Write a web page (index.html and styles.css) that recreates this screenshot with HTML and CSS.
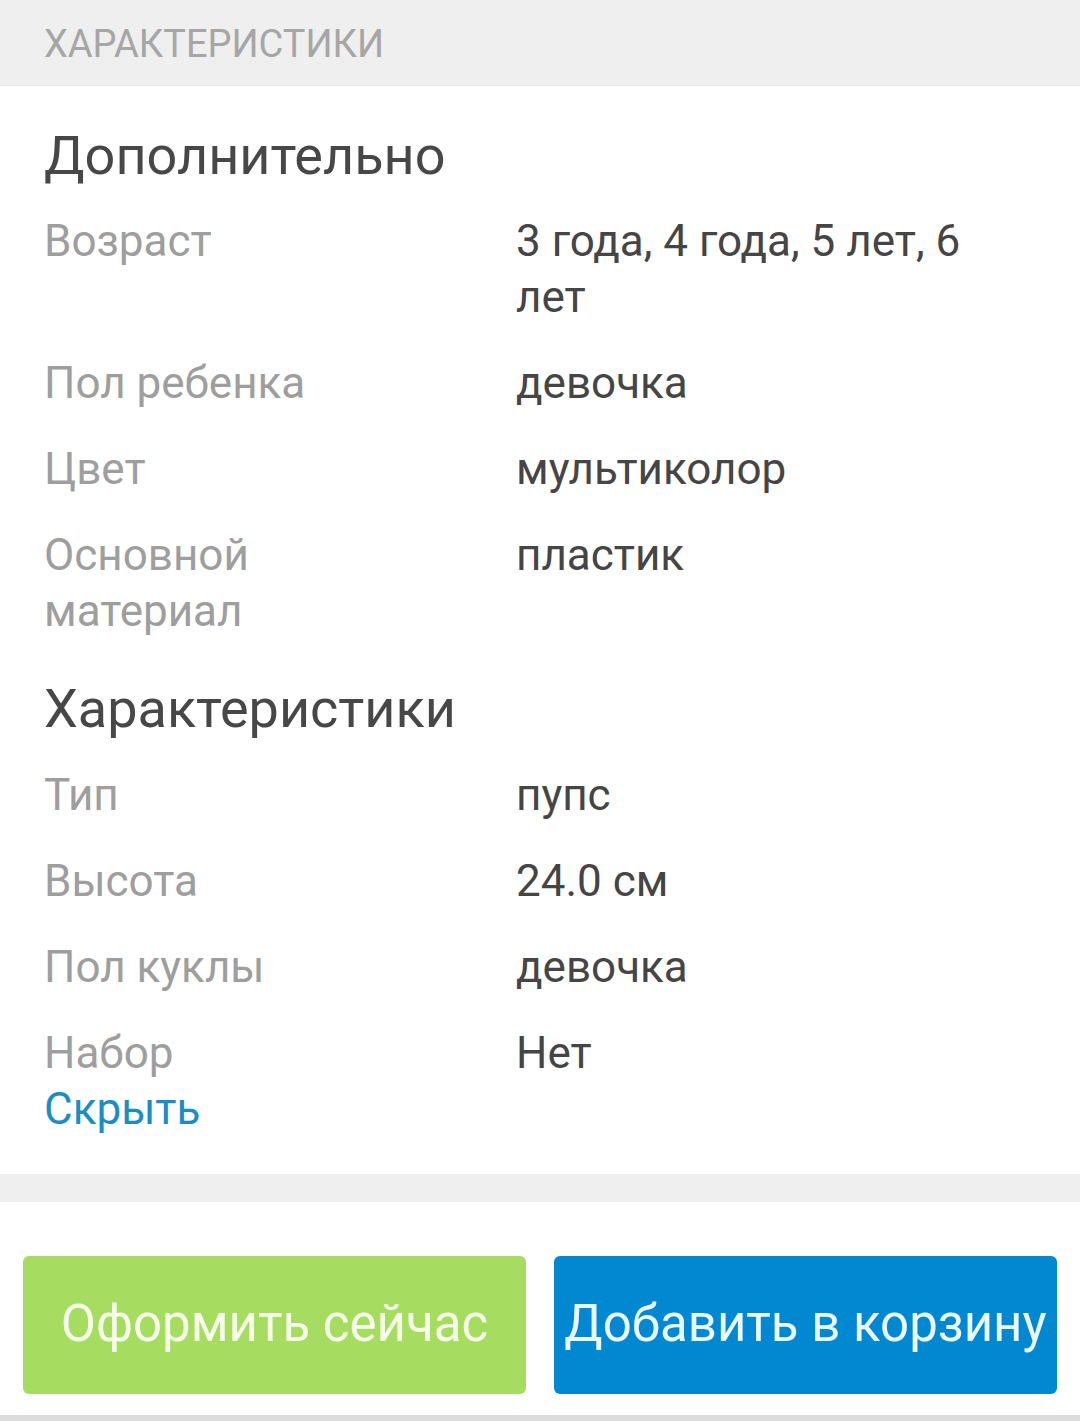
FILE: index.html
```html
<!DOCTYPE html>
<html lang="ru">
<head>
<meta charset="utf-8">
<title>Характеристики</title>
<link rel="stylesheet" href="styles.css">
</head>
<body>
<div class="page">
  <div class="section-title">ХАРАКТЕРИСТИКИ</div>
  <div class="specs">
    <h2 class="group-title">Дополнительно</h2>
    <div class="row"><div class="label">Возраст</div><div class="value">3 года, 4 года, 5 лет, 6 лет</div></div>
    <div class="row"><div class="label">Пол ребенка</div><div class="value">девочка</div></div>
    <div class="row"><div class="label">Цвет</div><div class="value">мультиколор</div></div>
    <div class="row"><div class="label">Основной материал</div><div class="value">пластик</div></div>
    <h2 class="group-title second">Характеристики</h2>
    <div class="row"><div class="label">Тип</div><div class="value">пупс</div></div>
    <div class="row"><div class="label">Высота</div><div class="value">24.0 см</div></div>
    <div class="row"><div class="label">Пол куклы</div><div class="value">девочка</div></div>
    <div class="row last"><div class="label">Набор</div><div class="value">Нет</div></div>
    <a class="toggle" href="#">Скрыть</a>
  </div>
  <div class="separator"></div>
  <div class="actions">
    <button class="btn btn-buy">Оформить сейчас</button>
    <button class="btn btn-cart">Добавить в корзину</button>
  </div>
  <div class="bottom-line"></div>
</div>
</body>
</html>
```

FILE: styles.css
```css
html, body {
  margin: 0;
  padding: 0;
  background: #ffffff;
}
body {
  font-family: Roboto, "Noto Sans", "Liberation Sans", sans-serif;
}
.page {
  width: 1080px;
  height: 1421px;
  display: flex;
  flex-direction: column;
}
.section-title {
  height: 86px;
  box-sizing: border-box;
  background: #efefef;
  color: #a6a6a6;
  font-size: 38px;
  line-height: 88px;
  padding-left: 44px;
  border-bottom: 1px solid #e6e6e6;
}
.specs {
  padding: 40px 44px 37px 44px;
  display: flex;
  flex-direction: column;
}
.group-title {
  margin: 0 0 27px 0;
  font-weight: 400;
  font-size: 54px;
  line-height: 60px;
  color: #474747;
}
.group-title.second {
  margin-top: 10px;
  margin-bottom: 28px;
}
.row {
  display: grid;
  grid-template-columns: 472px 1fr;
  font-size: 44px;
  line-height: 56px;
  margin-bottom: 30px;
}
.row.last {
  margin-bottom: 0;
}
.label {
  color: #9e9e9e;
  padding-right: 70px;
}
.value {
  color: #454545;
}
.toggle {
  font-size: 44px;
  line-height: 56px;
  color: #1b8dc4;
  text-decoration: none;
  align-self: flex-start;
}
.separator {
  height: 28px;
  background: #efefef;
}
.actions {
  display: flex;
  gap: 28px;
  padding: 54px 23px 21px 23px;
}
.btn {
  flex: 1;
  height: 138px;
  border: none;
  border-radius: 6px;
  font-family: Roboto, "Noto Sans", "Liberation Sans", sans-serif;
  font-size: 51px;
  padding: 0 0 4px 0;
}
.btn-buy {
  background: #a6dc60;
  color: #f6ffea;
}
.btn-cart {
  background: #0288d1;
  color: #eaf9ff;
}
.bottom-line {
  height: 6px;
  background: #dcdcdc;
}
```
